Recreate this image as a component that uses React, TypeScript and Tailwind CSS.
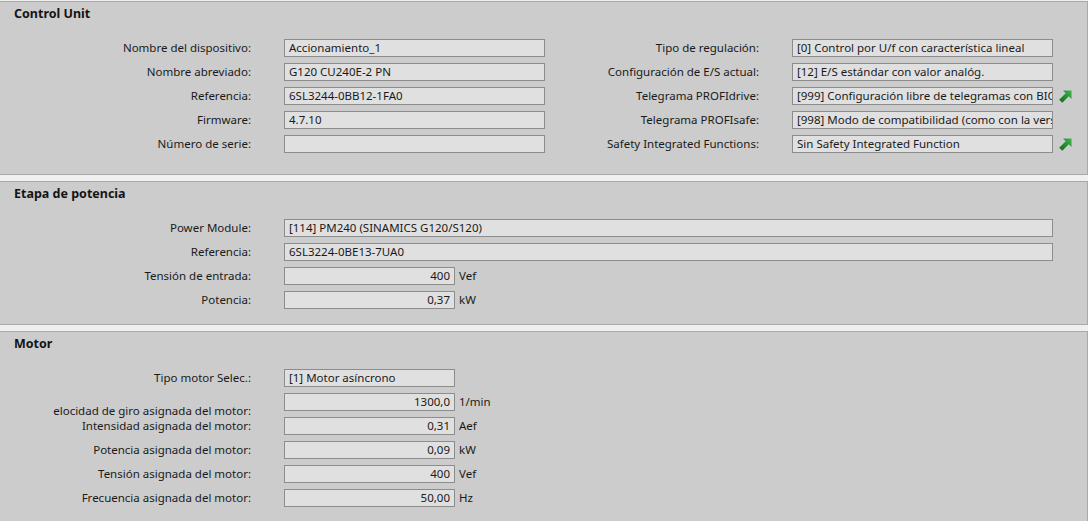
import React from 'react';

const font = { fontFamily: '"Noto Sans", "Open Sans", sans-serif' };

function GoArrow() {
  return (
    <svg width="13" height="13" viewBox="0 0 13 13" className="shrink-0">
      <defs>
        <linearGradient id="ga" x1="0" y1="1" x2="1" y2="0">
          <stop offset="0" stopColor="#0b6b1c" />
          <stop offset="1" stopColor="#3fb54a" />
        </linearGradient>
      </defs>
      <path d="M4 0.5 H12.5 V9 L9.8 6.3 L3.3 12.8 L0.2 9.7 L6.7 3.2 Z" fill="url(#ga)" />
    </svg>
  );
}

function Field({ value, w, num, unit }: { value: string; w: string; num?: boolean; unit?: string }) {
  return (
    <div className="flex items-center">
      <div
        className={`${w} h-[18px] border border-[#8c8c8c] bg-[#e0e0e0] px-[4px] text-[11.5px] leading-[16px] text-[#1a1a1a] whitespace-nowrap overflow-hidden ${num ? 'text-right' : ''}`}
      >
        {value}
      </div>
      {unit && <span className="ml-[4px] text-[11.5px] text-[#1a1a1a]">{unit}</span>}
    </div>
  );
}

function Label({ text, w, shift }: { text: string; w: string; shift?: boolean }) {
  return (
    <div
      className={`${w} shrink-0 text-right text-[11.5px] text-[#1a1a1a] whitespace-nowrap ${shift ? 'translate-y-[9px]' : ''}`}
    >
      {text}
    </div>
  );
}

function Panel({ title, children, pb }: { title: string; children: React.ReactNode; pb: string }) {
  return (
    <div className={`bg-[#cccccc] border-y border-r border-[#a9a9a9] ${pb}`}>
      <div className="h-[25px] pl-[14px] flex items-center text-[12.5px] font-bold text-[#141414]">{title}</div>
      <div className="mt-[12px] flex flex-col gap-[6px]">{children}</div>
    </div>
  );
}

function Row({ label, children, shift }: { label: string; children: React.ReactNode; shift?: boolean }) {
  return (
    <div className="flex items-center h-[18px]">
      <Label text={label} w="w-[251px]" shift={shift} />
      <div className="ml-[33px]">{children}</div>
    </div>
  );
}

const cu = [
  ['Nombre del dispositivo:', 'Accionamiento_1', 'Tipo de regulación:', '[0] Control por U/f con característica lineal', false],
  ['Nombre abreviado:', 'G120 CU240E-2 PN', 'Configuración de E/S actual:', '[12] E/S estándar con valor analóg.', false],
  ['Referencia:', '6SL3244-0BB12-1FA0', 'Telegrama PROFIdrive:', '[999] Configuración libre de telegramas con BICO', true],
  ['Firmware:', '4.7.10', 'Telegrama PROFIsafe:', '[998] Modo de compatibilidad (como con la versión anterior)', false],
  ['Número de serie:', '', 'Safety Integrated Functions:', 'Sin Safety Integrated Function', true],
] as const;

export default function App() {
  return (
    <div className="w-[1088px] h-[521px] overflow-hidden bg-[#f0f0f0] pt-[1px] flex flex-col gap-[6px]" style={font}>
      <Panel title="Control Unit" pb="pb-[21px]">
        {cu.map(([l1, v1, l2, v2, arrow]) => (
          <div key={l1} className="flex items-center h-[18px]">
            <Label text={l1} w="w-[251px]" />
            <div className="ml-[33px]">
              <Field value={v1} w="w-[261px]" />
            </div>
            <Label text={l2} w="w-[214px]" />
            <div className="ml-[33px] flex items-center gap-[6px]">
              <Field value={v2} w="w-[261px]" />
              {arrow && <GoArrow />}
            </div>
          </div>
        ))}
      </Panel>

      <Panel title="Etapa de potencia" pb="pb-[15px]">
        <Row label="Power Module:">
          <Field value="[114] PM240 (SINAMICS G120/S120)" w="w-[769px]" />
        </Row>
        <Row label="Referencia:">
          <Field value="6SL3224-0BE13-7UA0" w="w-[769px]" />
        </Row>
        <Row label="Tensión de entrada:">
          <Field value="400" w="w-[171px]" num unit="Vef" />
        </Row>
        <Row label="Potencia:">
          <Field value="0,37" w="w-[171px]" num unit="kW" />
        </Row>
      </Panel>

      <Panel title="Motor" pb="pb-[15px]">
        <Row label="Tipo motor Selec.:">
          <Field value="[1] Motor asíncrono" w="w-[171px]" />
        </Row>
        <Row label="elocidad de giro asignada del motor:" shift>
          <Field value="1300,0" w="w-[171px]" num unit="1/min" />
        </Row>
        <Row label="Intensidad asignada del motor:">
          <Field value="0,31" w="w-[171px]" num unit="Aef" />
        </Row>
        <Row label="Potencia asignada del motor:">
          <Field value="0,09" w="w-[171px]" num unit="kW" />
        </Row>
        <Row label="Tensión asignada del motor:">
          <Field value="400" w="w-[171px]" num unit="Vef" />
        </Row>
        <Row label="Frecuencia asignada del motor:">
          <Field value="50,00" w="w-[171px]" num unit="Hz" />
        </Row>
      </Panel>
    </div>
  );
}
